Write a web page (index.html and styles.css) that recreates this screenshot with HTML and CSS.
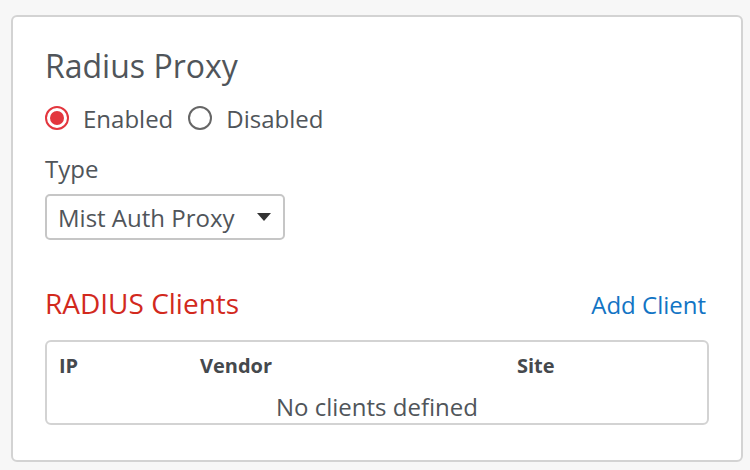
FILE: index.html
```html
<!DOCTYPE html>
<html lang="en">
<head>
  <meta charset="UTF-8" />
  <meta name="viewport" content="width=device-width, initial-scale=1.0"/>
  <title>Radius Proxy</title>
  <link rel="stylesheet" href="styles.css">
</head>
<body>
  <section class="panel">
    <h2 class="panel-title">Radius Proxy</h2>

    <div class="radio-group">
      <label class="radio checked"><span class="radio-dot"></span>Enabled</label>
      <label class="radio"><span class="radio-dot"></span>Disabled</label>
    </div>

    <div class="field-label">Type</div>
    <div class="select">
      <span>Mist Auth Proxy</span>
      <span class="caret"></span>
    </div>

    <div class="clients-head">
      <h3>RADIUS Clients</h3>
      <a href="#">Add Client</a>
    </div>

    <div class="clients-table">
      <div class="row head">
        <div>IP</div>
        <div>Vendor</div>
        <div>Site</div>
      </div>
      <div class="empty">No clients defined</div>
    </div>
  </section>
</body>
</html>
```

FILE: styles.css
```css
*{margin:0;padding:0;box-sizing:border-box}
body{font-family:"Open Sans",sans-serif;background:#f7f7f7;color:#50555a}
.panel{margin:15px 7px 0 11px;height:447px;background:#fff;border:2px solid #d3d3d3;border-radius:6px;padding:26px 32px 0 32px}
.panel-title{font-size:32px;font-weight:normal;line-height:46px;color:#50555a}
.radio-group{display:flex;gap:15px;margin-top:12px;height:34px;align-items:center}
.radio{display:flex;align-items:center;gap:14px;font-size:24px}
.radio-dot{width:24px;height:24px;border-radius:50%;border:2px solid #666;display:inline-block;position:relative}
.radio.checked .radio-dot{border-color:#e3363e}
.radio.checked .radio-dot::after{content:"";position:absolute;left:3px;top:3px;width:14px;height:14px;border-radius:50%;background:#e3363e}
.field-label{font-size:24px;margin-top:17px;line-height:34px}
.select{display:flex;align-items:center;justify-content:space-between;width:240px;height:46px;margin-top:8px;border:2px solid #c6c6c6;border-radius:5px;padding:0 12px 0 11px;font-size:24px}
.caret{width:0;height:0;border-left:7px solid transparent;border-right:7px solid transparent;border-top:8px solid #333}
.clients-head{display:flex;justify-content:space-between;align-items:baseline;margin-top:44px}
.clients-head h3{font-size:28px;font-weight:normal;color:#d2291d}
.clients-head a{font-size:24px;color:#1274c4;text-decoration:none;margin-right:3px}
.clients-table{margin-top:18px;border:2px solid #d3d3d3;border-radius:6px;height:85px;padding:10px 12px 0}
.row{display:grid;grid-template-columns:141px 317px 1fr}
.row.head{font-size:20px;font-weight:bold;color:#45494d;line-height:28px}
.empty{text-align:center;font-size:24px;line-height:32px;margin-top:11px}
```
